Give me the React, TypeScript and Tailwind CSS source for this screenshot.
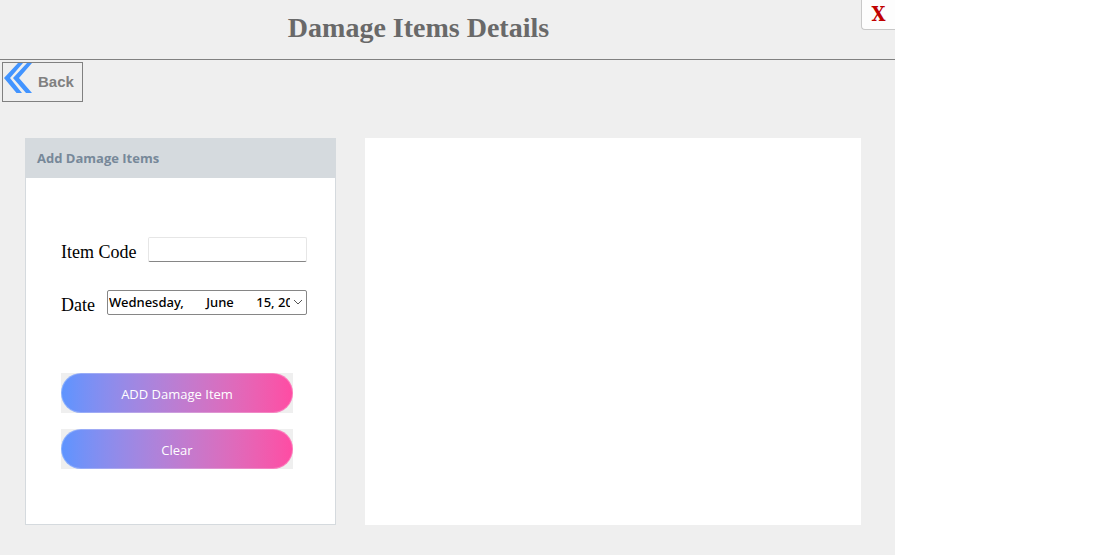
import { useState } from "react";

const serif = "font-['Liberation_Serif',serif]";
const sans = "font-['Open_Sans',sans-serif]";

const gradientButton =
  "h-10 w-full rounded-full border border-white/25 bg-linear-to-r from-[#5c94ff] to-[#ff4ba3] bg-origin-border pt-1 text-[13px] font-medium text-white cursor-pointer";

const dates = [
  ["Wednesday,", "June", "15, 2022"],
  ["Thursday,", "June", "16, 2022"],
].map((parts) => parts.join("\u00a0".repeat(6) + "\u2009"));

function BackIcon() {
  return (
    <svg width="28" height="30" viewBox="0 0 28 30" fill="#4294ff" aria-hidden="true">
      <path d="M14 0H19L6 15L18 30H12.500L0 15Z" />
      <path d="M23 0H28L15 15L28 30H22L9 15Z" />
    </svg>
  );
}

export default function App() {
  const [code, setCode] = useState("");
  const [date, setDate] = useState(dates[0]);

  const clear = () => {
    setCode("");
    setDate(dates[0]);
  };

  return (
    <div className={`min-h-screen bg-white pr-[215px] ${sans}`}>
      <div className="min-h-screen bg-[#efefef]">
        <header className="grid h-[60px] grid-cols-[1fr_auto_1fr] border-b border-[#808080]">
          <h1 className={`${serif} col-start-2 ml-[-58px] self-center pb-1 text-[28px] leading-8 font-bold text-[#696969]`}>
            Damage Items Details
          </h1>
          <button
            type="button"
            aria-label="Close"
            className="h-[30px] w-[34px] cursor-pointer justify-self-end rounded-bl border-b border-l border-[#c8c8c8] bg-[#fdfdfd] pb-0.5 font-['DejaVu_Serif_Condensed','DejaVu_Serif',serif] text-[20px] leading-6 font-bold text-[#c00000]"
          >
            X
          </button>
        </header>

        <nav className="px-0.5 pt-0.5">
          <button
            type="button"
            className="flex h-10 w-[81px] cursor-pointer items-start gap-1.5 border border-[#808080] pl-px font-['Liberation_Sans',sans-serif] text-[15px] leading-[38px] font-bold text-[#808080]"
          >
            <BackIcon />
            Back
          </button>
        </nav>

        <main className="flex gap-[29px] pt-9 pr-[34px] pb-[30px] pl-[25px]">
          <section className="w-[311px] shrink-0 border border-[#d5dade] bg-white">
            <h2 className="bg-[#d5dade] pl-[11px] text-[13px] leading-[39px] font-bold text-[#778899]">
              Add Damage Items
            </h2>
            <form className="px-[35px] pt-[59px] pb-[55px]" onSubmit={(e) => e.preventDefault()}>
              <div className="-mr-[7px] flex flex-col gap-7">
                <div className="flex h-[25px] items-center gap-3">
                  <label htmlFor="item-code" className={`${serif} pt-1 text-[18px] leading-6 whitespace-nowrap text-black`}>
                    Item Code
                  </label>
                  <input
                    id="item-code"
                    type="text"
                    value={code}
                    onChange={(e) => setCode(e.target.value)}
                    className="h-full min-w-0 flex-1 rounded-xs border border-[#e6e6e6] border-b-[#868686] px-1 text-[13px] outline-none"
                  />
                </div>
                <div className="flex h-[25px] items-center gap-3">
                  <label htmlFor="date" className={`${serif} pt-1 text-[18px] leading-6 text-black`}>
                    Date
                  </label>
                  <div className="relative h-full min-w-0 flex-1">
                    <select
                      id="date"
                      value={date}
                      onChange={(e) => setDate(e.target.value)}
                      className="block h-full w-full appearance-none rounded-xs border border-[#868686] bg-white pt-px pr-4 pl-px font-['Noto_Sans',sans-serif] text-[13px] font-medium text-black outline-none"
                    >
                      {dates.map((d) => (
                        <option key={d}>{d}</option>
                      ))}
                    </select>
                    <svg
                      className="pointer-events-none absolute top-2 right-1"
                      width="10"
                      height="8"
                      viewBox="0 0 10 8"
                      fill="none"
                      stroke="#555"
                      aria-hidden="true"
                    >
                      <path d="M1 2L5 6L9 2" />
                    </svg>
                  </div>
                </div>
              </div>
              <div className="mt-[58px] flex flex-col gap-4 pr-[7px]">
                <div className="bg-[#efefef]">
                  <button type="submit" className={gradientButton}>ADD Damage Item</button>
                </div>
                <div className="bg-[#efefef]">
                  <button type="button" onClick={clear} className={gradientButton}>Clear</button>
                </div>
              </div>
            </form>
          </section>

          <section aria-label="Damage items" className="flex-1 bg-white" />
        </main>
      </div>
    </div>
  );
}
